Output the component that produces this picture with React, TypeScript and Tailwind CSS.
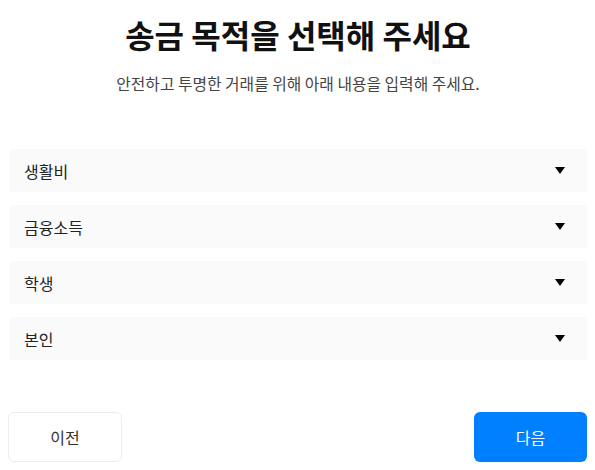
const options = ['생활비', '금융소득', '학생', '본인'];

function Caret() {
  return (
    <svg width="10" height="7" viewBox="0 0 10 7" aria-hidden="true">
      <polygon points="0,0 10,0 5,7" fill="#000" />
    </svg>
  );
}

export default function App() {
  return (
    <main
      className="w-[595px] h-[470px] bg-white pl-[9px] pr-[8px] flex flex-col"
      style={{ fontFamily: '"Noto Sans CJK KR", "Noto Sans", sans-serif' }}
    >
      <h1 className="mt-[12px] text-center text-[32px] leading-[44px] font-bold text-[#111]">
        송금 목적을 선택해 주세요
      </h1>
      <p className="mt-[17px] text-center text-[15.8px] leading-[22px] text-[#444]">
        안전하고 투명한 거래를 위해 아래 내용을 입력해 주세요.
      </p>
      <div className="mt-[54px] flex flex-col gap-[13px]">
        {options.map((o) => (
          <div
            key={o}
            className="h-[43px] rounded-[4px] bg-[#fafafa] flex items-center justify-between pl-[15px] pr-[22px]"
          >
            <span className="text-[16px] text-[#222]">{o}</span>
            <Caret />
          </div>
        ))}
      </div>
      <div className="mt-[52px] flex justify-between">
        <button
          type="button"
          className="-ml-px w-[114px] h-[50px] rounded-[6px] border border-[#ececec] bg-white text-[16px] text-[#333]"
        >
          이전
        </button>
        <button
          type="button"
          className="w-[113px] h-[50px] rounded-[6px] bg-[#0080ff] text-[16px] text-white"
        >
          다음
        </button>
      </div>
    </main>
  );
}
